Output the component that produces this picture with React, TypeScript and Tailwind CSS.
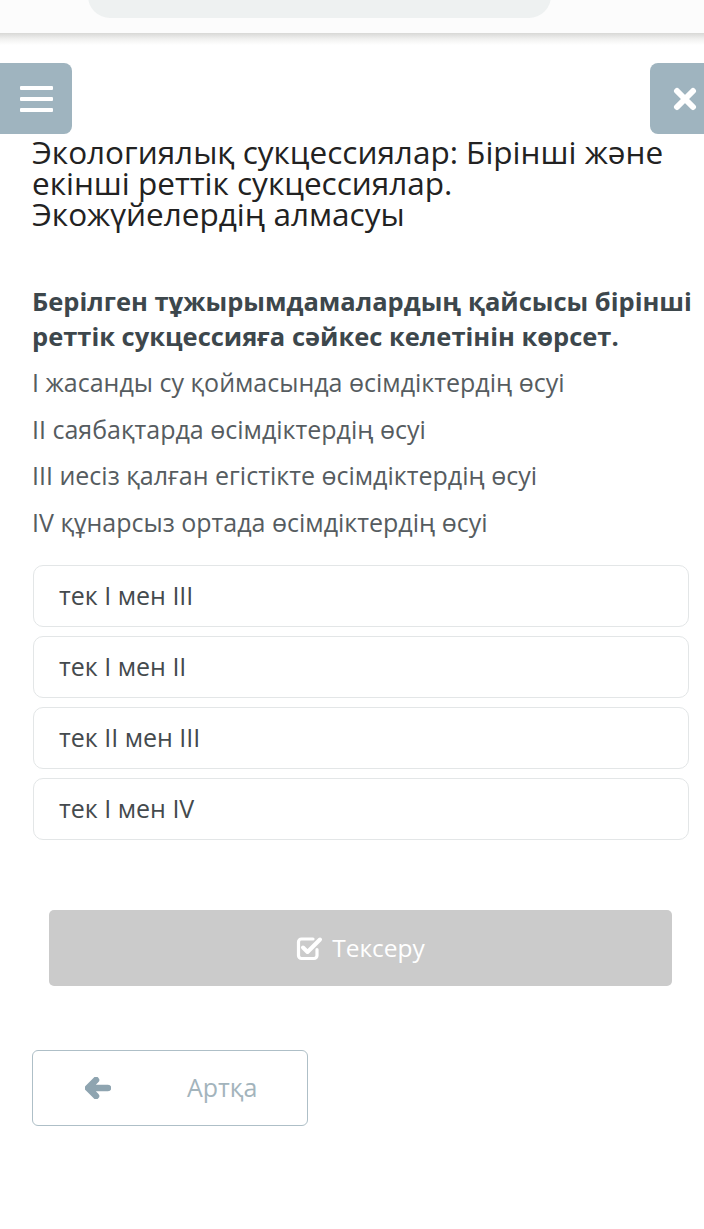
import React from 'react';

const statements = [
  'I жасанды су қоймасында өсімдіктердің өсуі',
  'II саябақтарда өсімдіктердің өсуі',
  'III иесіз қалған егістікте өсімдіктердің өсуі',
  'IV құнарсыз ортада өсімдіктердің өсуі',
];

const options = ['тек I мен III', 'тек I мен II', 'тек II мен III', 'тек I мен IV'];

function MenuIcon() {
  return (
    <div className="flex flex-col gap-[7px]">
      <span className="block w-[33px] h-[4px] rounded-[1px] bg-white" />
      <span className="block w-[33px] h-[4px] rounded-[1px] bg-white" />
      <span className="block w-[33px] h-[4px] rounded-[1px] bg-white" />
    </div>
  );
}

function CloseIcon() {
  return (
    <svg width="24" height="24" viewBox="0 0 24 24">
      <path d="M4 4 L20 20 M20 4 L4 20" stroke="white" strokeWidth="6" strokeLinecap="round" />
    </svg>
  );
}

function CheckSquareIcon() {
  return (
    <svg width="27" height="25" viewBox="0 0 27 25" fill="none">
      <path
        d="M17 3 H5.5 a3 3 0 0 0 -3 3 V19.5 a3 3 0 0 0 3 3 H18 a3 3 0 0 0 3 -3 V13.5"
        stroke="white"
        strokeWidth="3.2"
        strokeLinecap="round"
      />
      <path d="M7 11.5 L11.5 16 L24 3.5" stroke="white" strokeWidth="4" strokeLinecap="round" strokeLinejoin="round" />
    </svg>
  );
}

function ArrowLeftIcon() {
  return (
    <svg width="26" height="22" viewBox="0 0 26 22">
      <path d="M11 3 L3 11 L11 19 M4 11 H23" stroke="#8ea4b0" strokeWidth="6.5" strokeLinecap="round" strokeLinejoin="round" fill="none" />
    </svg>
  );
}

export default function App() {
  return (
    <div className="w-[704px] min-h-[1229px] bg-white overflow-hidden font-['Open_Sans',sans-serif]">
      {/* browser bar, mostly cut off */}
      <div className="h-[33px] bg-[#fcfcfc] overflow-hidden">
        <div className="ml-[88px] w-[463px] h-[50px] -mt-[32px] rounded-[22px] bg-[#eef1f1]" />
      </div>
      <div className="h-[12px] bg-gradient-to-b from-[#d8d8d6] via-[#f1f1f0] to-white" />

      <div className="mt-[18px] flex justify-between">
        <button className="w-[72px] h-[71px] rounded-r-[8px] bg-[#9fb4bf] flex items-center justify-center">
          <MenuIcon />
        </button>
        <button className="w-[54px] h-[71px] rounded-l-[8px] bg-[#9fb4bf] flex items-center pl-[23px]">
          <CloseIcon />
        </button>
      </div>

      <h1 className="mt-[2px] pl-[32px] pr-[30px] text-[31.5px] leading-[31px] text-[#222222] font-normal">
        Экологиялық сукцессиялар: Бірінші және екінші реттік сукцессиялар. Экожүйелердің алмасуы
      </h1>

      <p className="mt-[55px] pl-[32px] pr-[8px] text-[25.5px] leading-[35px] font-bold text-[#3d474c]">
        Берілген тұжырымдамалардың қайсысы бірінші реттік сукцессияға сәйкес келетінін көрсет.
      </p>

      <div className="mt-[5px] px-[32px] text-[25px] leading-[46.5px] text-[#565c60]">
        {statements.map(s => (
          <p key={s}>{s}</p>
        ))}
      </div>

      <div className="mt-[20px] pl-[33px] pr-[15px] flex flex-col gap-[9px]">
        {options.map(o => (
          <div
            key={o}
            className="h-[62px] rounded-[10px] border border-[#e3e6e7] flex items-center px-[25px] text-[25px] text-[#444a4d]"
          >
            {o}
          </div>
        ))}
      </div>

      <div className="mt-[70px] pl-[49px] pr-[32px]">
        <button className="w-full h-[76px] rounded-[5px] bg-[#cbcbcb] flex items-center justify-center gap-[9px] text-[24.5px] text-white">
          <CheckSquareIcon />
          Тексеру
        </button>
      </div>

      <div className="mt-[64px] px-[32px]">
        <button className="w-[276px] h-[76px] rounded-[6px] border border-[#aebfc7] flex items-center pl-[52px] text-[25px] text-[#a3b4bc]">
          <ArrowLeftIcon />
          <span className="ml-[76px]">Артқа</span>
        </button>
      </div>
    </div>
  );
}
